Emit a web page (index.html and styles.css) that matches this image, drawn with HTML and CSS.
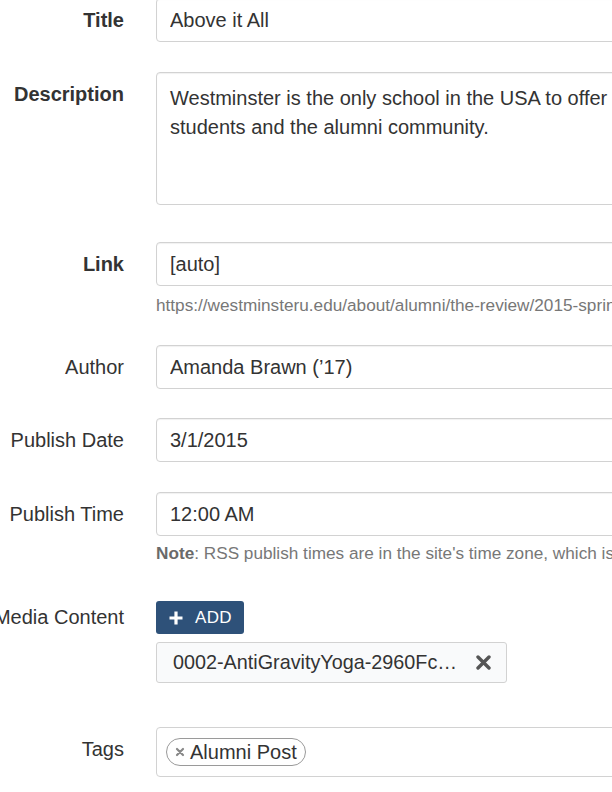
FILE: index.html
```html
<!DOCTYPE html>
<html>
<head>
    <title>Edit Post</title>
    <link rel="stylesheet" href="styles.css">
</head>
<body>
    <form class="post-form">
        <div class="field">
            <label class="field-label required">Title</label>
            <div class="field-body">
                <input class="text-input" type="text" value="Above it All">
            </div>
        </div>

        <div class="field field-wide">
            <label class="field-label required">Description</label>
            <div class="field-body">
                <textarea class="text-area">Westminster is the only school in the USA to offer hands-on AntiGravity Yoga classes to both
students and the alumni community.</textarea>
            </div>
        </div>

        <div class="field">
            <label class="field-label required">Link</label>
            <div class="field-body">
                <input class="text-input" type="text" value="[auto]">
                <div class="help-text">https://westminsteru.edu/about/alumni/the-review/2015-spring/above-it-all</div>
            </div>
        </div>

        <div class="field field-tight">
            <label class="field-label">Author</label>
            <div class="field-body">
                <input class="text-input" type="text" value="Amanda Brawn (’17)">
            </div>
        </div>

        <div class="field">
            <label class="field-label">Publish Date</label>
            <div class="field-body">
                <input class="text-input" type="text" value="3/1/2015">
            </div>
        </div>

        <div class="field field-loose">
            <label class="field-label">Publish Time</label>
            <div class="field-body">
                <input class="text-input" type="text" value="12:00 AM">
                <div class="help-text help-note"><b>Note</b>: RSS publish times are in the site's time zone, which is America/Denver.</div>
            </div>
        </div>

        <div class="field field-media">
            <label class="field-label label-button">Media Content</label>
            <div class="field-body">
                <button type="button" class="add-button">
                    <svg width="14" height="14" viewBox="0 0 14 14"><path d="M7 0.5v13M0.5 7h13" stroke="#fff" stroke-width="3.2"/></svg>
                    ADD
                </button>
                <div class="media-item">
                    <span class="media-name">0002-AntiGravityYoga-2960Fc…</span>
                    <svg class="media-remove" width="15" height="15" viewBox="0 0 15 15"><path d="M2 2l11 11M13 2L2 13" stroke="#555" stroke-width="3.4" stroke-linecap="round"/></svg>
                </div>
            </div>
        </div>

        <div class="field">
            <label class="field-label">Tags</label>
            <div class="field-body">
                <div class="tag-box">
                    <span class="tag">
                        <svg width="10" height="10" viewBox="0 0 10 10"><path d="M2 2l6 6M8 2L2 8" stroke="#888" stroke-width="2.2" stroke-linecap="round"/></svg>
                        Alumni Post
                    </span>
                </div>
            </div>
        </div>
    </form>
</body>
</html>
```

FILE: styles.css
```css
html, body {
    margin: 0;
    overflow: hidden;
    background-color: #fff;
}
body {
    font-family: "Liberation Sans", Arial, sans-serif;
    color: #333;
}
.post-form {
    margin-top: -2px;
}
.field {
    display: grid;
    grid-template-columns: 124px 920px;
    column-gap: 32px;
    margin-bottom: 30px;
}
.field-wide {
    margin-bottom: 37px;
}
.field-tight {
    margin-bottom: 29px;
}
.field-loose {
    margin-bottom: 38px;
}
.field-media {
    margin-bottom: 44px;
}
.field-label {
    display: flex;
    justify-content: flex-end;
    white-space: nowrap;
    font-size: 20px;
    line-height: 24px;
    padding-top: 10px;
    color: #333;
}
.required {
    font-weight: bold;
}
.label-button {
    padding-top: 4px;
}
.text-input,
.text-area {
    display: block;
    box-sizing: border-box;
    width: 100%;
    margin: 0;
    border: 1px solid #d2d2d2;
    border-radius: 4px;
    box-shadow: inset 0 1px 1px rgba(0, 0, 0, 0.06);
    font-family: "Liberation Sans", Arial, sans-serif;
    font-size: 20px;
    color: #333;
    background-color: #fff;
}
.text-input {
    height: 44px;
    padding: 0 13px;
}
.text-area {
    height: 133px;
    padding: 11px 13px;
    line-height: 29px;
    resize: none;
    overflow: hidden;
    white-space: pre;
}
.help-text {
    margin-top: 9px;
    font-size: 17.2px;
    line-height: 20px;
    color: #777;
    white-space: nowrap;
}
.help-note {
    margin-top: 7px;
}
.help-note b {
    color: #6a6a6a;
}
.add-button {
    display: flex;
    align-items: center;
    gap: 12px;
    height: 33px;
    padding: 0 12px 0 13px;
    border: none;
    border-radius: 3px;
    background-color: #2e5179;
    color: #fff;
    font-family: "Liberation Sans", Arial, sans-serif;
    font-size: 17px;
    letter-spacing: 0.3px;
}
.media-item {
    display: flex;
    align-items: center;
    justify-content: space-between;
    box-sizing: border-box;
    width: 351px;
    height: 41px;
    margin-top: 8px;
    padding: 0 15px 0 16px;
    border: 1px solid #d2d2d2;
    border-radius: 3px;
    background-color: #f9fafb;
    font-size: 19.8px;
    color: #333;
}
.tag-box {
    box-sizing: border-box;
    width: 100%;
    height: 50px;
    padding: 10px 9px;
    border: 1px solid #d2d2d2;
    border-radius: 4px;
}
.tag {
    display: inline-flex;
    align-items: center;
    gap: 5px;
    box-sizing: border-box;
    height: 28px;
    padding: 0 8px 0 8px;
    border: 1.5px solid #9a9a9a;
    border-radius: 14px;
    font-size: 20px;
    color: #333;
}
```
